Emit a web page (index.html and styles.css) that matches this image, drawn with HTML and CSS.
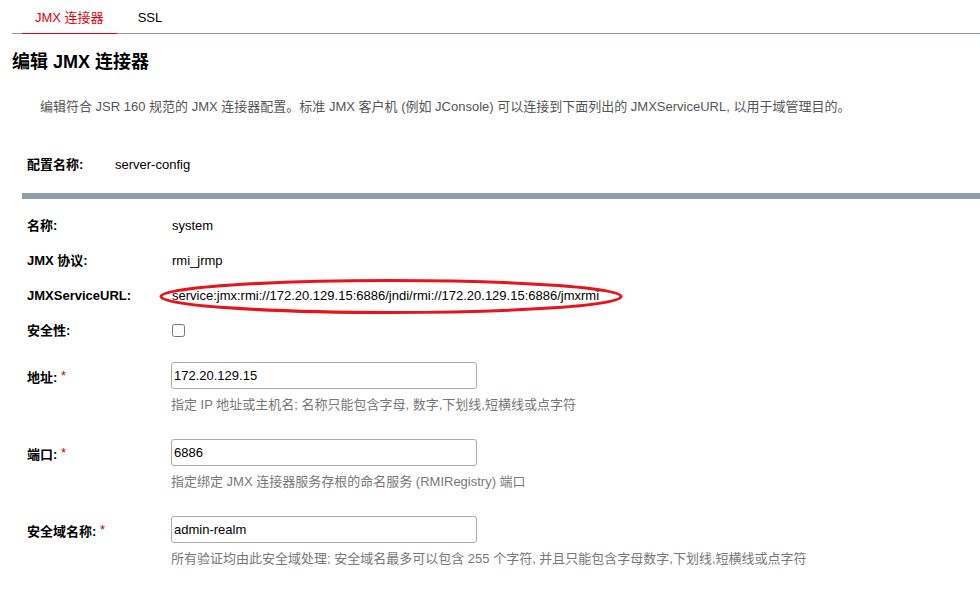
FILE: index.html
```html
<!DOCTYPE html>
<html lang="zh-CN">
<head>
    <meta charset="UTF-8">
    <title>编辑 JMX 连接器</title>
    <link rel="stylesheet" href="styles.css">
</head>
<body>

    <!-- Tabs -->
    <div class="tabs">
        <a class="tab active" href="#">JMX 连接器</a>
        <a class="tab" href="#">SSL</a>
    </div>

    <h1 class="title">编辑 JMX 连接器</h1>
    <p class="desc">编辑符合 JSR 160 规范的 JMX 连接器配置。标准 JMX 客户机 (例如 JConsole) 可以连接到下面列出的 JMXServiceURL, 以用于域管理目的。</p>

    <div class="config-row">
        <span class="label">配置名称:</span>
        <span class="value">server-config</span>
    </div>

    <div class="band"></div>

    <!-- Read-only properties -->
    <div class="props">
        <div class="prop">
            <span class="label">名称:</span>
            <span class="value">system</span>
        </div>
        <div class="prop">
            <span class="label">JMX 协议:</span>
            <span class="value">rmi_jrmp</span>
        </div>
        <div class="prop">
            <span class="label">JMXServiceURL:</span>
            <span class="value url">service:jmx:rmi://172.20.129.15:6886/jndi/rmi://172.20.129.15:6886/jmxrmi
                <svg class="mark" width="470" height="38" viewBox="0 0 470 38">
                    <ellipse cx="234" cy="18.5" rx="230" ry="16" fill="none" stroke="#e8141a" stroke-width="3"/>
                </svg>
            </span>
        </div>
        <div class="prop">
            <span class="label">安全性:</span>
            <span class="value"><input type="checkbox" class="check"></span>
        </div>
    </div>

    <!-- Editable fields -->
    <div class="field">
        <label class="label" for="addr">地址: <span class="req">*</span></label>
        <div>
            <input id="addr" class="text" type="text" value="172.20.129.15">
            <div class="help">指定 IP 地址或主机名; 名称只能包含字母, 数字,下划线,短横线或点字符</div>
        </div>
    </div>
    <div class="field">
        <label class="label" for="port">端口: <span class="req">*</span></label>
        <div>
            <input id="port" class="text" type="text" value="6886">
            <div class="help">指定绑定 JMX 连接器服务存根的命名服务 (RMIRegistry) 端口</div>
        </div>
    </div>
    <div class="field">
        <label class="label" for="realm">安全域名称: <span class="req">*</span></label>
        <div>
            <input id="realm" class="text" type="text" value="admin-realm">
            <div class="help">所有验证均由此安全域处理; 安全域名最多可以包含 255 个字符, 并且只能包含字母数字,下划线,短横线或点字符</div>
        </div>
    </div>

</body>
</html>
```

FILE: styles.css
```css
body {
    margin: 0;
    font-family: "Liberation Sans", "Noto Sans CJK SC", sans-serif;
    font-size: 13px;
    color: #000;
    background: #fff;
}

.tabs {
    display: flex;
    margin-left: 12px;
    padding-left: 10px;
    height: 33px;
    border-bottom: 1px solid #8e9ba3;
}

.tab {
    padding: 10px 13px 0;
    line-height: 16px;
    color: #000;
    text-decoration: none;
    margin-right: 8px;
}

.tab.active {
    color: #e8000b;
    border-bottom: 1px solid #e8000b;
    margin-bottom: -1px;
}

.title {
    margin: 16px 0 0 12px;
    font-size: 18px;
    line-height: 24px;
    font-weight: bold;
}

.desc {
    margin: 25px 0 0 40px;
    line-height: 16px;
    color: #555;
}

.config-row {
    display: grid;
    grid-template-columns: 88px auto;
    margin: 42px 0 0 27px;
    line-height: 16px;
}

.label {
    font-weight: bold;
}

.band {
    height: 6px;
    margin: 20px 0 0 22px;
    background: #8f9ea6;
}

.props {
    margin-top: 9px;
}

.prop {
    display: grid;
    grid-template-columns: 145px auto;
    padding: 9.5px 0 9.5px 27px;
    line-height: 16px;
}

.url {
    position: relative;
}

.mark {
    position: absolute;
    left: -15px;
    top: -10px;
}

.check {
    margin: 1px 0 0;
    width: 13px;
    height: 13px;
    vertical-align: top;
}

.field {
    display: grid;
    grid-template-columns: 144px auto;
    padding-left: 27px;
    margin-top: 26px;
}

.props + .field {
    margin-top: 14px;
}

.field .label {
    line-height: 27px;
}

.req {
    color: #c00;
    font-weight: normal;
    vertical-align: 2px;
}

.text {
    display: block;
    box-sizing: border-box;
    width: 306px;
    height: 27px;
    margin: 0;
    padding: 0 2px;
    border: 1px solid #aaa;
    border-radius: 3px;
    font-family: inherit;
    font-size: 13px;
    color: #000;
}

.help {
    margin-top: 8px;
    line-height: 16px;
    color: #777;
}
```
